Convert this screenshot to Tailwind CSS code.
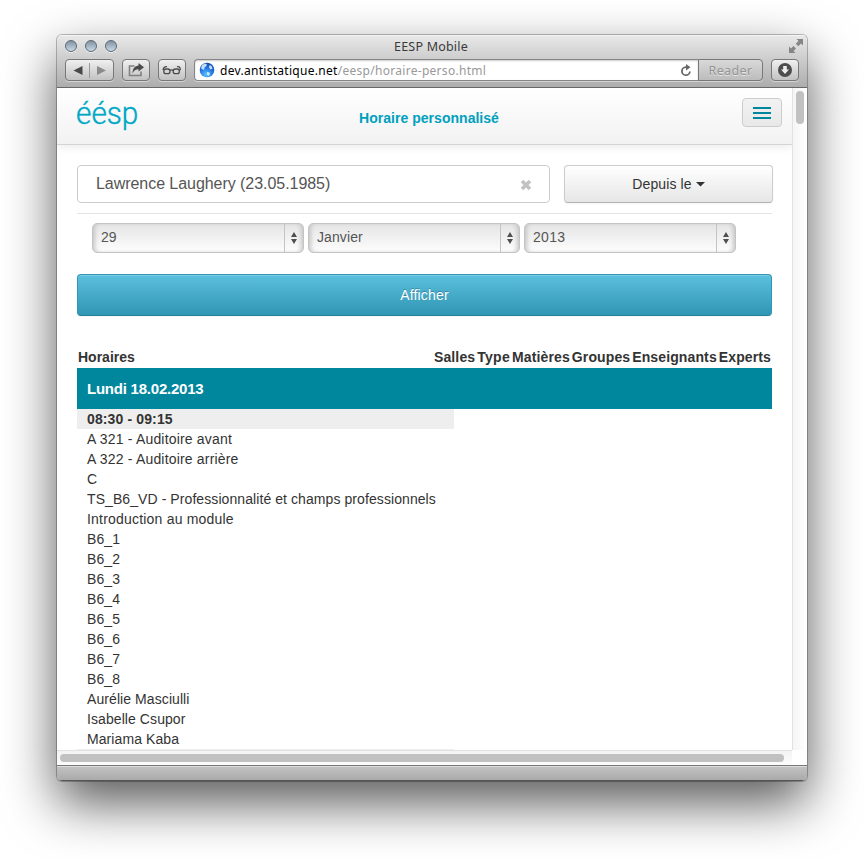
<!DOCTYPE html>
<html lang="fr">
<head>
<meta charset="utf-8">
<title>EESP Mobile</title>
<script src="https://cdn.jsdelivr.net/npm/@tailwindcss/browser@4"></script>
</head>
<body class="h-[860px] w-[864px] overflow-hidden bg-white pl-[57px] pt-[35px] font-['Liberation_Sans',Arial,sans-serif] text-[14px] leading-5 text-[#333]">
<div class="flex h-[746px] w-[750px] flex-col overflow-hidden rounded-[5px] shadow-[0_0_0_1px_rgba(0,0,0,0.25),0_22px_52px_0_rgba(0,0,0,0.66)]">
  <header class="flex h-[53px] shrink-0 flex-col border-b border-[#686868] bg-linear-to-b from-[#e9e9e9] to-[#adadad] font-['Noto_Sans',sans-serif] shadow-[inset_0_1px_0_#f4f4f4]">
    <div class="flex h-6 items-start justify-between pl-2 pr-1">
      <div class="flex w-[60px] gap-2 pt-[5px]">
        <i class="size-3 rounded-full border border-[#5d6873] bg-linear-to-b from-[#8191a0] to-[#c9dae7] shadow-[0_1px_0_#eee]"></i>
        <i class="size-3 rounded-full border border-[#5d6873] bg-linear-to-b from-[#8191a0] to-[#c9dae7] shadow-[0_1px_0_#eee]"></i>
        <i class="size-3 rounded-full border border-[#5d6873] bg-linear-to-b from-[#8191a0] to-[#c9dae7] shadow-[0_1px_0_#eee]"></i>
      </div>
      <div class="pr-[6px] pt-[2px] text-[12.5px] leading-5 tracking-[0.2px] text-[#3a3a3a]">EESP Mobile</div>
      <div class="flex w-[60px] justify-end pt-[4px]">
        <svg width="14" height="14" viewBox="0 0 14 14" fill="#858585"><path d="M7.500 0H14v6.500l-2-2-2.700 2.700-2.500-2.500 2.700-2.700zM0 7.500l2 2 2.500-2.500 2.500 2.500-2.500 2.500 2 2H0z"/></svg>
      </div>
    </div>
    <div class="flex h-[22px] gap-2 px-2">
      <div class="flex h-[22px] w-[49px] items-center rounded-[4px] border border-[#777] bg-linear-to-b from-[#f0f0f0] to-[#c2c2c2] shadow-[0_1px_0_#d5d5d5]">
        <svg width="47" height="20" viewBox="0 0 47 20"><path d="M7.500 10.500L16.500 6v9z" fill="#484848"/><path d="M23.500 3v15" stroke="#999"/><path d="M40 10.500L31 6v9z" fill="#8b8b8b"/></svg>
      </div>
      <div class="flex h-[22px] w-7 items-center justify-center rounded-[4px] border border-[#777] bg-linear-to-b from-[#f0f0f0] to-[#c2c2c2] shadow-[0_1px_0_#d5d5d5]">
        <svg width="18" height="16" viewBox="0 0 18 16"><path d="M7.500 4H2.500v9.500h11.500V9.500" fill="none" stroke="#808080" stroke-width="1.600"/><path d="M11.500 1l5.500 4.300-5.500 4.200V7.200C8.500 7.200 7 8.500 5.500 11.500 5.500 6.500 8 3.700 11.500 3.500z" fill="#4c4c4c"/></svg>
      </div>
      <div class="flex h-[22px] w-7 items-center justify-center rounded-[4px] border border-[#777] bg-linear-to-b from-[#f0f0f0] to-[#c2c2c2] shadow-[0_1px_0_#d5d5d5]">
        <svg width="20" height="12" viewBox="0 0 20 12" fill="none" stroke="#4c4c4c" stroke-width="1.300"><rect x="1.800" y="5" width="6.200" height="4.700" rx="2.200"/><rect x="11.200" y="5" width="6.200" height="4.700" rx="2.200"/><path d="M8 6.500q1.600-1.300 3.200 0M1 6.200Q1.500 2.500 5 2.700M18.300 6.200Q18.500 2 15 2.700"/></svg>
      </div>
      <div class="flex h-[22px] flex-1">
        <div class="flex flex-1 items-center rounded-l-[4px] border border-r-0 border-[#858585] bg-white pl-1 shadow-[inset_0_1px_2px_#ccc,0_1px_0_#d5d5d5]">
          <svg width="16" height="16" viewBox="0 0 16 16"><defs><radialGradient id="globe" cx=".45" cy=".8" r=".8"><stop offset="0" stop-color="#58c4ff"/><stop offset=".6" stop-color="#2070df"/><stop offset="1" stop-color="#1b47a5"/></radialGradient></defs><circle cx="8" cy="8" r="7.300" fill="url(#globe)"/><path d="M3 3l3-1.500 2 1L7 4.500 5.500 5.500 5 8 2 6.500zM10.500 3l2 1 1 2.500-2 1L10 5.500zM8 10l2.500.5.5 1.500-1.500 2L8 12.500z" fill="#dff3ff" opacity=".85"/></svg>
          <div class="flex-1 whitespace-nowrap pl-[5px] pt-px text-[12px] tracking-[0.290px] text-[#999]"><span class="text-black">dev.antistatique.net</span>/eesp/horaire-perso.html</div>
          <svg class="mr-[6px]" width="12" height="14" viewBox="0 0 12 14"><path d="M7 4.200H5.800A4 4 0 1 0 9.900 8.500" fill="none" stroke="#666" stroke-width="1.800"/><path d="M6 1l4.500 3.300L6 7.500z" fill="#666"/></svg>
        </div>
        <div class="flex w-[65px] items-center justify-center rounded-r-[4px] border border-[#777] bg-linear-to-b from-[#d9d9d9] to-[#bcbcbc] pt-px text-[12.500px] tracking-[0.380px] text-[#959595] shadow-[0_1px_0_#d5d5d5] [text-shadow:0_1px_0_#e5e5e5]">Reader</div>
      </div>
      <div class="flex h-[22px] w-7 items-center justify-center rounded-[4px] border border-[#777] bg-linear-to-b from-[#f0f0f0] to-[#c2c2c2] shadow-[0_1px_0_#d5d5d5]">
        <svg width="14" height="14" viewBox="0 0 14 14"><circle cx="7" cy="7" r="7" fill="#4d4d4d"/><path d="M5.200 3h3.600v3.500H11L7 11 3 6.500h2.200z" fill="#eee"/></svg>
      </div>
    </div>
  </header>

  <div class="flex h-[662px] shrink-0 bg-white">
    <main class="h-[662px] w-[735px] overflow-hidden">
      <div class="flex h-[57px] items-start justify-between border-b border-[#d4d4d4] bg-linear-to-b from-white to-[#f2f2f2] pl-5 pr-[10px] shadow-[0_1px_10px_rgba(0,0,0,0.1)]">
        <div class="w-[130px]"><div class="-ml-px w-fit origin-left scale-x-[0.93] pt-[7px] font-['Roboto',sans-serif] text-[32px] font-light leading-[36px] text-[#00a8c6] [-webkit-text-stroke:0.4px_#00a8c6]">éésp</div></div>
        <h1 class="pr-px pt-5 font-bold tracking-[0.030px] text-[#00a0be]">Horaire personnalisé</h1>
        <div class="flex w-[130px] justify-end pt-[10px]">
          <button class="flex h-[29px] w-10 flex-col items-center justify-center gap-[3px] rounded-[4px] border border-[#ccc] bg-linear-to-b from-[#f2f2f2] to-[#e8e8e8]">
            <i class="h-[2px] w-[18px] bg-[#00869d]"></i><i class="h-[2px] w-[18px] bg-[#00869d]"></i><i class="h-[2px] w-[18px] bg-[#00869d]"></i>
          </button>
        </div>
      </div>
      <div class="px-5 pt-5">
        <div class="flex gap-[14px]">
          <div class="flex h-[38px] w-[473px] items-center justify-between rounded-[4px] border border-[#ccc] pl-[18px] pr-[17px] text-[16px] text-[#555]">
            <span class="tracking-[-0.050px]">Lawrence Laughery (23.05.1985)</span>
            <svg class="mt-px" width="12" height="12" viewBox="0 0 12 12"><path d="M2 2l8 8M10 2l-8 8" stroke="#c2c2c2" stroke-width="3.600"/></svg>
          </div>
          <button class="-mr-px flex h-[38px] w-[209px] items-center justify-center gap-1 rounded-[4px] border border-[#ccc] border-b-[#b3b3b3] bg-linear-to-b from-white to-[#e6e6e6] shadow-[0_1px_2px_rgba(0,0,0,0.05)]">
            <span class="tracking-[0.1px]">Depuis le</span><svg class="mt-px" width="9" height="5" viewBox="0 0 9 5"><path d="M0 0h9L4.500 4.500z" fill="#333"/></svg>
          </button>
        </div>
        <div class="mt-[10px] h-px bg-[#e4e4e4]"></div>
        <div class="mt-[9px] flex gap-1 pl-[15px] text-[#555]">
          <div class="flex h-[30px] w-[212px] items-center justify-between rounded-[5px] border border-[#c4c4c4] bg-linear-to-b from-[#e5e5e5] to-[#fdfdfd] pl-2 shadow-[inset_4px_0_4px_-2px_#c6c6c6,inset_-4px_0_4px_-2px_#c6c6c6]"><span class="-mt-[3px]">29</span><span class="flex h-[28px] w-[19px] items-center justify-center border-l border-[#c4c4c4]"><svg width="6" height="12" viewBox="0 0 6 12" fill="#505050"><path d="M3 0l3 5H0zM0 7h6l-3 5z"/></svg></span></div>
          <div class="flex h-[30px] w-[212px] items-center justify-between rounded-[5px] border border-[#c4c4c4] bg-linear-to-b from-[#e5e5e5] to-[#fdfdfd] pl-2 shadow-[inset_4px_0_4px_-2px_#c6c6c6,inset_-4px_0_4px_-2px_#c6c6c6]"><span class="-mt-[3px] tracking-[0.1px]">Janvier</span><span class="flex h-[28px] w-[19px] items-center justify-center border-l border-[#c4c4c4]"><svg width="6" height="12" viewBox="0 0 6 12" fill="#505050"><path d="M3 0l3 5H0zM0 7h6l-3 5z"/></svg></span></div>
          <div class="flex h-[30px] w-[212px] items-center justify-between rounded-[5px] border border-[#c4c4c4] bg-linear-to-b from-[#e5e5e5] to-[#fdfdfd] pl-2 shadow-[inset_4px_0_4px_-2px_#c6c6c6,inset_-4px_0_4px_-2px_#c6c6c6]"><span class="-mt-[3px] tracking-[0.3px]">2013</span><span class="flex h-[28px] w-[19px] items-center justify-center border-l border-[#c4c4c4]"><svg width="6" height="12" viewBox="0 0 6 12" fill="#505050"><path d="M3 0l3 5H0zM0 7h6l-3 5z"/></svg></span></div>
        </div>
        <button class="mt-[21px] flex h-[42px] w-[695px] items-center justify-center rounded-[4px] border border-[#2f96b4] border-b-[#25809a] bg-linear-to-b from-[#5bc0de] to-[#2f96b4] tracking-[0.150px] text-white shadow-[inset_0_1px_0_rgba(255,255,255,0.2),0_1px_2px_rgba(0,0,0,0.05)] [text-shadow:0_-1px_0_rgba(0,0,0,0.25)]">Afficher</button>

        <div class="mt-[31px] flex h-[21px] justify-between px-px font-bold">
          <span>Horaires</span>
          <div class="flex gap-[2px] whitespace-nowrap tracking-[0.120px]"><span>Salles</span><span class="tracking-[0.300px]">Type</span><span>Matières</span><span>Groupes</span><span>Enseignants</span><span class="tracking-0">Experts</span></div>
        </div>
        <h2 class="flex h-[41px] items-center bg-[#00869d] px-[10px] text-[15px] font-bold tracking-[-0.230px] text-white">Lundi 18.02.2013</h2>
        <div class="w-[377px]">
          <h3 class="bg-[#eee] px-[10px] font-bold tracking-[0.130px]">08:30 - 09:15</h3>
          <ul class="whitespace-nowrap px-[10px] tracking-[0.080px]">
            <li class="tracking-[0.180px]">A 321 - Auditoire avant</li>
            <li class="tracking-[0.180px]">A 322 - Auditoire arrière</li>
            <li>C</li>
            <li>TS_B6_VD - Professionnalité et champs professionnels</li>
            <li class="tracking-[0.200px]">Introduction au module</li>
            <li>B6_1</li>
            <li>B6_2</li>
            <li>B6_3</li>
            <li>B6_4</li>
            <li>B6_5</li>
            <li>B6_6</li>
            <li>B6_7</li>
            <li>B6_8</li>
            <li>Aurélie Masciulli</li>
            <li>Isabelle Csupor</li>
            <li>Mariama Kaba</li>
          </ul>
          <div class="h-5 bg-[#eee]"></div>
        </div>
      </div>
    </main>
    <aside class="flex w-[15px] justify-center border-l border-[#e2e2e2] bg-linear-to-r from-[#f5f5f5] to-white pt-[3px]">
      <i class="h-[33px] w-2 rounded-full bg-[#c1c1c1]"></i>
    </aside>
  </div>
  <div class="flex h-[15px] shrink-0 bg-white">
    <div class="w-[735px] border-t border-[#e2e2e2] bg-linear-to-b from-[#f3f3f3] to-[#fcfcfc] pl-[3px] pt-[3px]"><div class="h-2 w-[724px] rounded-full bg-[#c1c1c1]"></div></div>
  </div>
  <footer class="h-4 shrink-0 border-b border-t border-b-[#555] border-t-[#777] bg-linear-to-b from-[#c3c3c3] to-[#aaa] shadow-[inset_0_1px_0_#ddd]"></footer>
</div>
</body>
</html>
